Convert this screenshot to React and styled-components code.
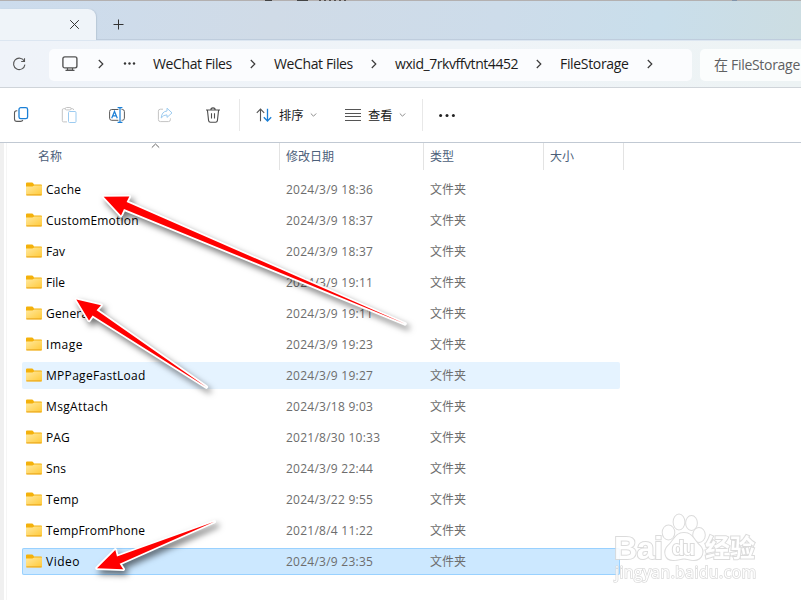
import styled, { createGlobalStyle, css } from "styled-components";

const GlobalStyle = createGlobalStyle`
  * {
    box-sizing: border-box;
  }
  body {
    margin: 0;
    overflow: hidden;
    background: #fff;
    font-family: "Open Sans", "Noto Sans CJK SC", sans-serif;
  }
`;

const Window = styled.div`
  position: relative;
  display: flex;
  flex-direction: column;
  width: 801px;
  height: 600px;
  overflow: hidden;
  background: #fff;
`;

const TopEdge = styled.div`
  height: 1px;
  background: repeating-linear-gradient(90deg, #55504e 0 2px, #b3b0b0 2px 5px) 319px
      0 / 30px 1px no-repeat,
    linear-gradient(#444, #444) 265px 0 / 7px 1px no-repeat,
    linear-gradient(#444, #444) 297px 0 / 11px 1px no-repeat,
    linear-gradient(#8394a8, #8394a8) 732px 0 / 5px 1px no-repeat, #b3b0b0;
`;

const TabBar = styled.div`
  display: flex;
  align-items: flex-end;
  height: 39px;
  border-bottom: 1px solid #bfcddd;
  background: linear-gradient(
    100deg,
    #ccdced 0%,
    #d0dbe7 34%,
    #cddcea 62%,
    #c9deeb 82%,
    #ccdde2 100%
  );
`;

const Tab = styled.div`
  display: flex;
  align-items: center;
  justify-content: flex-end;
  width: 96px;
  height: 31px;
  margin-bottom: -1px;
  padding-right: 16px;
  border-radius: 0 8px 0 0;
  background: #eff4f9;
  box-shadow: 1px 0 1px #b9c8d8;
`;

const NewTab = styled.div`
  display: flex;
  align-items: center;
  height: 29px;
  padding-left: 17px;
`;

const NavBar = styled.div`
  display: flex;
  align-items: center;
  height: 48px;
  padding: 1px 0 0 12px;
  border-top: 1px solid #dce6f1;
  border-bottom: 1px solid #cfd4d9;
  background: linear-gradient(90deg, #eff3f9, #eff4f8 60%, #edf3f4);
`;

const Address = styled.div`
  display: flex;
  flex: none;
  align-items: center;
  width: 643px;
  height: 32px;
  margin-left: 22px;
  padding: 0 0 1px 13px;
  border-radius: 5px;
  background: #fbfcfe;
`;

const Crumb = styled.span`
  width: ${(props) => props.$w}px;
  margin-left: ${(props) => props.$ml}px;
  padding-bottom: 1px;
  color: #1b1b1b;
  font-size: 14px;
  line-height: 20px;
  letter-spacing: ${(props) => props.$ls || 0}px;
  white-space: nowrap;
`;

const CrumbArrow = styled.svg`
  flex: none;
  margin-left: ${(props) => props.$ml}px;
`;

const Search = styled.div`
  flex: 1;
  min-width: 0;
  height: 32px;
  margin-left: 8px;
  padding-left: 14px;
  border-radius: 5px 0 0 5px;
  background: #fbfdfd;
  color: #5f6162;
  font-size: 14px;
  line-height: 31px;
  letter-spacing: -0.3px;
  white-space: nowrap;
`;

const Toolbar = styled.div`
  display: flex;
  align-items: center;
  height: 55px;
  padding-left: 13px;
  border-bottom: 1px solid #c1c9d3;
  background: #fff;
`;

const Tools = styled.div`
  display: flex;
  gap: 32px;
`;

const Divider = styled.div`
  width: 1px;
  height: 32px;
  margin: 0 16px 0 ${(props) => props.$ml}px;
  background: #e8e8e8;
`;

const MenuButton = styled.div`
  display: flex;
  align-items: center;
  margin-right: ${(props) => props.$mr}px;
  color: #1b1b1b;
  font-size: 12.3px;
  line-height: 18px;

  span {
    width: 25px;
    margin: 0 6px 0 7px;
    padding-top: 2px;
    white-space: nowrap;
  }
`;

const Content = styled.div`
  display: flex;
  flex: 1;
`;

const Gutter = styled.div`
  width: 7px;
  border-left: 4px solid #f0f0f0;
  border-right: 1px solid #f5f5f5;
`;

const Listing = styled.div`
  flex: 1;
`;

const HeadRow = styled.div`
  display: flex;
  height: 27px;
`;

const HeadCell = styled.div`
  width: ${(props) => props.$w}px;
  padding-left: ${(props) => props.$pl}px;
  border-right: 1px solid #e3e3e3;
  color: #4c607a;
  font-size: 12px;
  line-height: 27px;
`;

const SortMark = styled.svg`
  position: absolute;
  left: 151px;
  top: 143px;
`;

const Rows = styled.div`
  display: flex;
  flex-direction: column;
  gap: 4px;
  padding: 6px 0 0 15px;
`;

const Row = styled.div`
  display: grid;
  grid-template-columns: 264px 144px 1fr;
  align-items: center;
  width: 598px;
  height: 27px;
  border-radius: 2px;
  color: #6d6d6d;
  font-size: 12px;
  line-height: 18px;

  ${(props) =>
    props.$state === "hover" &&
    css`
      background: #e5f3ff;
    `}
  ${(props) =>
    props.$state === "selected" &&
    css`
      background: #cce8ff;
      box-shadow: inset 0 0 0 1px #99d1ff;
    `}
`;

const Name = styled.div`
  display: flex;
  align-items: center;
  gap: 4px;
  padding-left: 4px;
  color: #000;
  letter-spacing: ${(props) => props.$ls}px;

  svg {
    margin-bottom: 2px;
  }
`;

const DateText = styled.div`
  letter-spacing: 0.25px;
`;

const Overlay = styled.svg`
  position: absolute;
  left: 0;
  top: 0;
  filter: drop-shadow(3px 4px 3px rgba(0, 0, 0, 0.55));
`;

const Watermark = styled.svg`
  position: absolute;
  left: 606px;
  top: 506px;
`;

const files = [
  { name: "Cache", date: "2024/3/9 18:36", ls: 0.25 },
  { name: "CustomEmotion", date: "2024/3/9 18:37", ls: 0.2 },
  { name: "Fav", date: "2024/3/9 18:37", ls: 0.1 },
  { name: "File", date: "2024/3/9 19:11", ls: 0 },
  { name: "General", date: "2024/3/9 19:11", ls: 0.2 },
  { name: "Image", date: "2024/3/9 19:23", ls: 0.55 },
  { name: "MPPageFastLoad", date: "2024/3/9 19:27", ls: 0.3, state: "hover" },
  { name: "MsgAttach", date: "2024/3/18 9:03", ls: 0.35 },
  { name: "PAG", date: "2021/8/30 10:33", ls: 0.1 },
  { name: "Sns", date: "2024/3/9 22:44", ls: 0.1 },
  { name: "Temp", date: "2024/3/22 9:55", ls: 0.3 },
  { name: "TempFromPhone", date: "2021/8/4 11:22", ls: 0.15 },
  { name: "Video", date: "2024/3/9 23:35", ls: 0.5, state: "selected" },
];

const arrows = [
  "M103.7 196.7 L129.3 196.6 L126.6 202 L405 323.8 L124 209 L121 215.6 Z",
  "M76.3 299.4 L101 305.2 L96.6 310.2 L206.3 387 L92.6 315.5 L89 320.4 Z",
  "M97 568.3 L115.3 550 L117 556.6 L214.2 521.7 L119.6 563.7 L123.2 569.2 Z",
];

const Chevron = ({ ml }) => (
  <CrumbArrow $ml={ml} width="8" height="10" viewBox="0 0 8 10">
    <path d="M1.8 1 L5.8 5 L1.8 9" fill="none" stroke="#3a3a3a" strokeWidth="1.2" />
  </CrumbArrow>
);

const Down = () => (
  <svg width="7" height="6" viewBox="0 0 7 6">
    <path d="M0.8 1.5 L3.5 4.2 L6.2 1.5" fill="none" stroke="#8c8c8c" />
  </svg>
);

const Folder = () => (
  <svg width="16" height="14" viewBox="0 0 16 14">
    <defs>
      <linearGradient id="folder" x1="0" y1="0" x2="1" y2="1">
        <stop offset="0" stopColor="#ffe9a0" />
        <stop offset="1" stopColor="#ffc937" />
      </linearGradient>
    </defs>
    <path d="M0 1.5 Q0 .5 1 .5 H6 Q6.8 .5 7.2 1.2 L8 2.5 H15 Q16 2.5 16 3.5 V7 H0 Z" fill="#f4b10b" />
    <path d="M0 4.6 H6.4 L8.2 3.4 H16 V12.4 Q16 13.4 15 13.4 H1 Q0 13.4 0 12.4 Z" fill="url(#folder)" />
    <path d="M0.4 12.9 H15.6" stroke="#e8a317" strokeWidth="1" />
  </svg>
);

const ToolIcons = () => (
  <Tools>
    <svg width="16" height="16" viewBox="0 0 16 16" fill="none" strokeWidth="1.1">
      <path d="M4.3 3.7 H3.6 Q1.5 3.7 1.5 5.8 V12 Q1.5 14.4 3.9 14.4 H7.6 Q9.4 14.4 9.8 13" stroke="#5a5a5a" />
      <rect x="6" y=".7" width="8.6" height="11" rx="1.8" stroke="#1a7fd6" strokeWidth="1.3" />
    </svg>
    <svg width="16" height="16" viewBox="0 0 16 16" fill="none">
      <path d="M4.3 1.7 H2.5 Q1.3 1.7 1.3 2.9 V13.7 Q1.3 14.9 2.5 14.9 H6 M10 1.7 H11.7 Q12.6 1.7 12.6 3" stroke="#c4c4c4" />
      <rect x="4.3" y=".5" width="5.8" height="2.4" rx="1.2" stroke="#c4c4c4" />
      <rect x="7.5" y="4.5" width="7.5" height="11" rx="1" stroke="#9ccbf0" />
    </svg>
    <svg width="16" height="16" viewBox="0 0 16 16" fill="none">
      <path d="M9.4 2.5 H2.7 Q.6 2.5 .6 4.6 V11.2 Q.6 13.3 2.7 13.3 H9.4 M12.6 2.5 H13.3 Q15.4 2.5 15.4 4.6 V11.2 Q15.4 13.3 13.3 13.3 H12.6" stroke="#5a5a5a" />
      <path d="M11 .6 V15.4 M8.6 .6 H13.4 M8.6 15.4 H13.4" stroke="#1a7fd6" strokeWidth="1.2" />
      <path d="M2.7 11.2 L5.5 4.4 L8.3 11.2 M3.8 8.9 H7.2" stroke="#1a7fd6" strokeWidth="1.2" />
    </svg>
    <svg width="16" height="16" viewBox="0 0 16 16" fill="none">
      <path d="M6 2.2 H3.4 Q1.4 2.2 1.4 4.2 V12.6 Q1.4 14.6 3.4 14.6 H11.4 Q13.4 14.6 13.4 12.6 V11.4" stroke="#c4c4c4" />
      <path d="M10 1.2 L15 5.9 L10 10.4 V7.9 Q6.4 7.7 4.2 11 Q4.8 4.4 10 4 Z" stroke="#9ccbf0" strokeLinejoin="round" />
    </svg>
    <svg width="16" height="16" viewBox="0 0 16 16" fill="none" stroke="#4e4e4e" strokeWidth="1.1">
      <path d="M1 3 H15 M5.8 3 Q5.8 .9 8 .9 Q10.2 .9 10.2 3 M2.4 3 L3.6 13.6 Q3.8 15.2 5.4 15.2 H10.6 Q12.2 15.2 12.4 13.6 L13.6 3 M6.5 6.3 V11.6 M9.5 6.3 V11.6" />
    </svg>
  </Tools>
);

const App = () => {
  return (
    <>
      <GlobalStyle />
      <Window>
        <TopEdge />
        <TabBar>
          <Tab>
            <svg width="11" height="11" viewBox="0 0 11 11">
              <path d="M1.2 1.2 L9.8 9.8 M9.8 1.2 L1.2 9.8" stroke="#333" />
            </svg>
          </Tab>
          <NewTab>
            <svg width="11" height="11" viewBox="0 0 11 11">
              <path d="M5.5 .5 V10.5 M.5 5.5 H10.5" stroke="#333" />
            </svg>
          </NewTab>
        </TabBar>
        <NavBar>
          <svg width="15" height="15" viewBox="0 0 15 15" fill="none" stroke="#555" strokeWidth="1.1">
            <path d="M12.3 4.2 A5.7 5.7 0 1 0 12.9 7.6 M12.5 1.2 V4.5 H9.2" />
          </svg>
          <Address>
            <svg width="16" height="16" viewBox="0 0 16 16" fill="none" stroke="#555">
              <rect x=".9" y=".9" width="14" height="11" rx="1.8" strokeWidth="1.4" />
              <path d="M5.5 12 V14 M10.5 12 V14 M3.5 14.4 H12.5" strokeWidth="1.3" />
              <path d="M6 13 H10" strokeWidth="1.6" stroke="#999" />
            </svg>
            <Chevron ml={19} />
            <CrumbArrow $ml={18} width="13" height="4" viewBox="0 0 13 4" fill="#333">
              <circle cx="2" cy="1.5" r="1.2" />
              <circle cx="6.5" cy="1.5" r="1.2" />
              <circle cx="11" cy="1.5" r="1.2" />
            </CrumbArrow>
            <Crumb $ml={17} $w={79} $ls={-0.38}>WeChat Files</Crumb>
            <Chevron ml={17} />
            <Crumb $ml={17} $w={79} $ls={-0.38}>WeChat Files</Crumb>
            <Chevron ml={17} />
            <Crumb $ml={17} $w={123} $ls={-0.44}>wxid_7rkvffvtnt4452</Crumb>
            <Chevron ml={17} />
            <Crumb $ml={17} $w={69} $ls={-0.33}>FileStorage</Crumb>
            <Chevron ml={17} />
          </Address>
          <Search>在 FileStorage</Search>
        </NavBar>
        <Toolbar>
          <ToolIcons />
          <Divider $ml={18} />
          <MenuButton $mr={28}>
            <svg width="16" height="14" viewBox="0 0 16 14" fill="none" strokeWidth="1.1">
              <path d="M4.5 13.2 V1 M.8 4.8 L4.5 1 L8.2 4.8" stroke="#555" />
              <path d="M11.5 .8 V13 M7.8 9.2 L11.5 13 L15.2 9.2" stroke="#1a7fd6" strokeWidth="1.3" />
            </svg>
            <span>排序</span>
            <Down />
          </MenuButton>
          <MenuButton $mr={0}>
            <svg width="16" height="12" viewBox="0 0 16 12">
              <path d="M0 .5 H16 M0 4.5 H16 M0 7.5 H16 M0 11.5 H16" stroke="#555" />
            </svg>
            <span>查看</span>
            <Down />
          </MenuButton>
          <Divider $ml={16} />
          <svg width="17" height="4" viewBox="0 0 17 4" fill="#222">
            <circle cx="1.6" cy="2.5" r="1.5" />
            <circle cx="8" cy="2.5" r="1.5" />
            <circle cx="14.4" cy="2.5" r="1.5" />
          </svg>
        </Toolbar>
        <Content>
          <Gutter />
          <Listing>
            <HeadRow>
              <HeadCell $w={273} $pl={31}>名称</HeadCell>
              <HeadCell $w={144} $pl={6}>修改日期</HeadCell>
              <HeadCell $w={120} $pl={6}>类型</HeadCell>
              <HeadCell $w={80} $pl={6}>大小</HeadCell>
            </HeadRow>
            <Rows>
              {files.map((file) => (
                <Row key={file.name} $state={file.state}>
                  <Name $ls={file.ls}>
                    <Folder />
                    {file.name}
                  </Name>
                  <DateText>{file.date}</DateText>
                  <div>文件夹</div>
                </Row>
              ))}
            </Rows>
          </Listing>
        </Content>
        <SortMark width="9" height="6" viewBox="0 0 9 6">
          <path d="M.8 4.6 L4.5 1 L8.2 4.6" fill="none" stroke="#666" />
        </SortMark>
        <Watermark
          width="170"
          height="84"
          viewBox="0 0 170 84"
          fill="#fff"
          stroke="#d8d8d8"
          strokeWidth="2"
          paintOrder="stroke"
          opacity="0.9"
          fontFamily='"Liberation Sans", "Noto Sans CJK SC", sans-serif'
          fontWeight="bold"
        >
          <ellipse cx="62.5" cy="26.5" rx="5.8" ry="7" />
          <ellipse cx="73" cy="16" rx="5.4" ry="7.4" />
          <ellipse cx="85.5" cy="17" rx="5.4" ry="7" />
          <ellipse cx="93" cy="29" rx="5.8" ry="7" />
          <path d="M78 27 C87 27 88 35 94 40 C99 45 96 54 88 54 C83 54 81 52.5 78 52.5 C75 52.5 73 54 67 54 C59 54 57 45 62 40 C68 35 69 27 78 27 Z" />
          <text x="8" y="53" fontSize="32" textLength="49">Bai</text>
          <text x="66" y="49" fontSize="20" textLength="23">du</text>
          <text x="99" y="51" fontSize="25" textLength="50">经验</text>
          <text
            x="9"
            y="72"
            fontFamily='"Open Sans", sans-serif'
            fontSize="15.5"
            fontWeight="normal"
            strokeWidth="1.6"
            textLength="141"
          >
            jingyan.baidu.com
          </text>
        </Watermark>
        <Overlay width="801" height="600" viewBox="0 0 801 600">
          {arrows.map((d) => (
            <path
              key={d}
              d={d}
              fill="#f00"
              stroke="#fff"
              strokeWidth="3.6"
              strokeLinejoin="round"
              paintOrder="stroke"
            />
          ))}
        </Overlay>
      </Window>
    </>
  );
};

export default App;
